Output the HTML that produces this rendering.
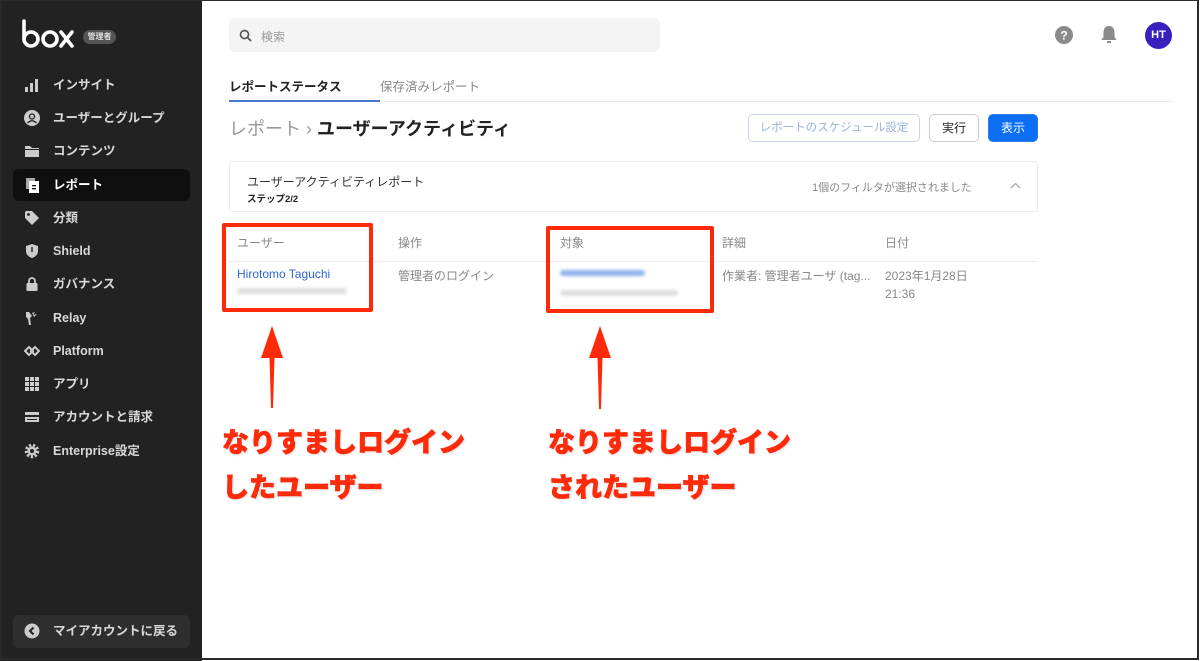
<!DOCTYPE html>
<html><head><meta charset="utf-8"><style>
*{margin:0;padding:0;box-sizing:border-box}
body{width:1200px;height:661px;overflow:hidden;background:#fff;font-family:"Liberation Sans","Noto Sans CJK JP",sans-serif;position:relative}
.a{position:absolute}
#frame{left:0;top:0;width:1199px;height:660px;border:2px solid #2a2a2a;border-top-width:1px;z-index:50;pointer-events:none}
#side{left:0;top:0;width:202px;height:661px;background:#222}
.nav{position:absolute;left:13px;width:177px;height:32px;color:#d8d8d8;font-size:12.5px;font-weight:bold;line-height:33px;padding-left:40px}
.nav svg{position:absolute;left:11px;top:8px}
.nav.act{background:#0f0f0f;border-radius:6px;color:#fff}
.t{color:#888;font-size:12px}
.big{font-size:27px;font-weight:900;color:#ff2a0a;line-height:45px;-webkit-text-stroke:0.6px #ff2a0a;text-shadow:0 0 3px #fff,1px 1px 2px #ccc;white-space:nowrap}
</style></head><body>
<div id="frame" class="a"></div>
<div id="side" class="a">
<svg class="a" style="left:20px;top:18px" width="56" height="32" viewBox="0 0 56 32"><g fill="none" stroke="#fff" stroke-width="3.6" stroke-linecap="round"><line x1="4" y1="3" x2="4" y2="21"/><circle cx="11" cy="21" r="7"/><circle cx="30" cy="21" r="7"/><line x1="41" y1="14" x2="52" y2="28"/><line x1="52" y1="14" x2="41" y2="28"/></g></svg>
<div class="a" style="left:83px;top:30px;width:33px;height:14px;background:#555;border-radius:7px;color:#ddd;font-size:8px;line-height:14px;text-align:center;font-weight:bold">管理者</div>
<div class="nav" style="top:69px"><svg width="16" height="16"><rect x="1" y="10" width="3" height="5" fill="#ccc"/><rect x="6" y="6" width="3" height="9" fill="#ccc"/><rect x="11" y="2" width="3" height="13" fill="#ccc"/></svg>インサイト</div>
<div class="nav" style="top:102px"><svg width="16" height="16"><circle cx="8" cy="8" r="8" fill="#ccc"/><circle cx="8" cy="6.5" r="2.5" fill="none" stroke="#222" stroke-width="1.3"/><path d="M3.5 13 Q8 8.5 12.5 13" fill="none" stroke="#222" stroke-width="1.3"/></svg>ユーザーとグループ</div>
<div class="nav" style="top:135px"><svg width="16" height="16"><path d="M1 3h5l2 2h7v9H1z" fill="#ccc"/><rect x="1" y="6" width="14" height="1" fill="#222"/></svg>コンテンツ</div>
<div class="nav act" style="top:169px"><svg width="16" height="16"><rect x="2" y="1" width="9" height="11" fill="#aaa"/><rect x="5" y="4" width="10" height="12" fill="#fff"/><rect x="8" y="8" width="4" height="1.3" fill="#111"/><rect x="8" y="11" width="4" height="1.3" fill="#111"/></svg>レポート</div>
<div class="nav" style="top:202px"><svg width="16" height="16"><path d="M1 2v6l7 7 7-7-7-7H2z" fill="#ccc"/><circle cx="4.5" cy="4.5" r="1.4" fill="#222"/></svg>分類</div>
<div class="nav" style="top:235px"><svg width="16" height="16"><path d="M8 1l6 2v5c0 4-3 6-6 7-3-1-6-3-6-7V3z" fill="#ccc"/><rect x="7.3" y="4" width="1.4" height="5" fill="#222"/></svg>Shield</div>
<div class="nav" style="top:268px"><svg width="16" height="16"><rect x="2.5" y="7" width="11" height="8" rx="1" fill="#ccc"/><path d="M5 7V5a3 3 0 0 1 6 0v2" fill="none" stroke="#ccc" stroke-width="1.8"/></svg>ガバナンス</div>
<div class="nav" style="top:302px"><svg width="16" height="16"><path d="M2 2h3l3 4-2 2 1 7H5L4 9 2 7z M8 3l3-1-2 3 4-1-3 3" fill="#ccc"/></svg>Relay</div>
<div class="nav" style="top:335px"><svg width="16" height="16"><path d="M1 8l4-4 4 4-4 4zM7 8l4-4 4 4-4 4z" fill="none" stroke="#ccc" stroke-width="2"/></svg>Platform</div>
<div class="nav" style="top:368px"><svg width="16" height="16" fill="#ccc"><rect x="1" y="1" width="4" height="4"/><rect x="6" y="1" width="4" height="4"/><rect x="11" y="1" width="4" height="4"/><rect x="1" y="6" width="4" height="4"/><rect x="6" y="6" width="4" height="4"/><rect x="11" y="6" width="4" height="4"/><rect x="1" y="11" width="4" height="4"/><rect x="6" y="11" width="4" height="4"/><rect x="11" y="11" width="4" height="4"/></svg>アプリ</div>
<div class="nav" style="top:401px"><svg width="16" height="16"><rect x="1" y="3" width="14" height="10" fill="#ccc"/><rect x="1" y="6" width="14" height="2" fill="#222"/><rect x="3" y="10" width="10" height="1" fill="#222"/></svg>アカウントと請求</div>
<div class="nav" style="top:435px"><svg width="16" height="16"><circle cx="8" cy="8" r="5.5" fill="none" stroke="#ccc" stroke-width="3.5" stroke-dasharray="2.2 1.6"/><circle cx="8" cy="8" r="4.5" fill="#ccc"/><circle cx="8" cy="8" r="2" fill="#222"/></svg>Enterprise設定</div>
<div class="nav" style="top:615px;background:#2e2e2e;border-radius:6px;height:33px;line-height:33px"><svg width="16" height="16" style="top:8px"><circle cx="8" cy="8" r="7.5" fill="#ccc"/><path d="M9.5 4.5L6 8l3.5 3.5" fill="none" stroke="#222" stroke-width="2"/></svg>マイアカウントに戻る</div>
</div>

<div class="a" style="left:229px;top:18px;width:431px;height:34px;background:#f4f4f4;border-radius:6px"></div>
<svg class="a" style="left:239px;top:29px" width="13" height="13"><circle cx="5.5" cy="5.5" r="4" fill="none" stroke="#555" stroke-width="1.7"/><line x1="8.5" y1="8.5" x2="12" y2="12" stroke="#555" stroke-width="1.8"/></svg>
<div class="a t" style="left:261px;top:28px;color:#999">検索</div>
<svg class="a" style="left:1055px;top:26px" width="18" height="18"><circle cx="9" cy="9" r="9" fill="#8a8a8a"/><text x="9" y="13.5" font-size="12" font-weight="bold" fill="#fff" text-anchor="middle" font-family="Liberation Sans">?</text></svg>
<svg class="a" style="left:1100px;top:25px" width="18" height="20"><path d="M9 1c-4 0-5.5 3-5.5 7v4L1.5 15h15L14.5 12V8C14.5 4 13 1 9 1z" fill="#8a8a8a"/><rect x="7" y="16" width="4" height="2" fill="#8a8a8a"/></svg>
<div class="a" style="left:1145px;top:22px;width:27px;height:27px;border-radius:50%;background:#3a1fbf;color:#fff;font-size:11px;font-weight:bold;text-align:center;line-height:27px">HT</div>

<div class="a" style="left:229px;top:76px;font-size:12.5px;font-weight:bold;color:#222">レポートステータス</div>
<div class="a t" style="left:380px;top:76px;font-size:12.5px">保存済みレポート</div>
<div class="a" style="left:229px;top:101px;width:943px;height:1px;background:#e8e8e8"></div>
<div class="a" style="left:229px;top:100px;width:151px;height:2px;background:#4a78d0"></div>
<div class="a" style="left:229px;top:115px;font-size:18px;color:#999">レポート › <span style="color:#222;font-weight:bold">ユーザーアクティビティ</span></div>

<div class="a" style="left:748px;top:114px;width:172px;height:28px;border:1px solid #c6d5f0;border-radius:5px;color:#9db2dc;font-size:11.5px;text-align:center;line-height:26px">レポートのスケジュール設定</div>
<div class="a" style="left:929px;top:114px;width:50px;height:28px;border:1px solid #ccc;border-radius:5px;color:#222;font-size:12px;text-align:center;line-height:26px">実行</div>
<div class="a" style="left:988px;top:114px;width:50px;height:28px;border:1px solid #2f7ae5;border-radius:5px;background:#0a6ff5;color:#fff;font-size:12px;text-align:center;line-height:26px">表示</div>

<div class="a" style="left:229px;top:161px;width:809px;height:51px;border:1px solid #ececec;border-radius:3px"></div>
<div class="a" style="left:247px;top:173px;font-size:12px;color:#333">ユーザーアクティビティレポート</div>
<div class="a" style="left:247px;top:191px;font-size:9.5px;font-weight:bold;color:#222">ステップ2/2</div>
<div class="a t" style="left:812px;top:179px;font-size:11px">1個のフィルタが選択されました</div>
<svg class="a" style="left:1010px;top:182px" width="11" height="8"><path d="M1 6l4.5-4.5L10 6" fill="none" stroke="#aaa" stroke-width="1.3"/></svg>

<div class="a t" style="left:237px;top:234px">ユーザー</div>
<div class="a t" style="left:398px;top:234px">操作</div>
<div class="a t" style="left:560px;top:234px">対象</div>
<div class="a t" style="left:722px;top:234px">詳細</div>
<div class="a t" style="left:885px;top:234px">日付</div>
<div class="a" style="left:229px;top:261px;width:809px;height:1px;background:#ececec"></div>
<div class="a" style="left:237px;top:267px;font-size:12px;color:#2f66d0">Hirotomo Taguchi</div>
<div class="a" style="left:237px;top:288px;width:110px;height:6px;background:#ddd;border-radius:3px;filter:blur(1.5px)"></div>
<div class="a t" style="left:398px;top:267px">管理者のログイン</div>
<div class="a" style="left:560px;top:270px;width:85px;height:6px;background:#8fb1ec;border-radius:3px;filter:blur(1.5px)"></div>
<div class="a" style="left:560px;top:290px;width:118px;height:6px;background:#ddd;border-radius:3px;filter:blur(1.5px)"></div>
<div class="a t" style="left:722px;top:267px">作業者: 管理者ユーザ (tag...</div>
<div class="a t" style="left:885px;top:267px;line-height:18px">2023年1月28日<br>21:36</div>

<div class="a" style="left:222px;top:223px;width:151px;height:89px;border:4px solid #ff2a0a;border-radius:2px"></div>
<div class="a" style="left:546px;top:226px;width:168px;height:87px;border:4px solid #ff2a0a;border-radius:2px"></div>
<svg class="a" style="left:250px;top:320px" width="400" height="95"><g fill="#ff2a0a"><path d="M22 6L11 38h8.5L21 88h2L24.5 38H33z"/><path d="M350 6L339 38h8.5L349 89h2L352.5 38H361z"/></g></svg>
<div class="a big" style="left:222px;top:421px">なりすましログイン<br>したユーザー</div>
<div class="a big" style="left:548px;top:421px">なりすましログイン<br>されたユーザー</div>
</body></html>
